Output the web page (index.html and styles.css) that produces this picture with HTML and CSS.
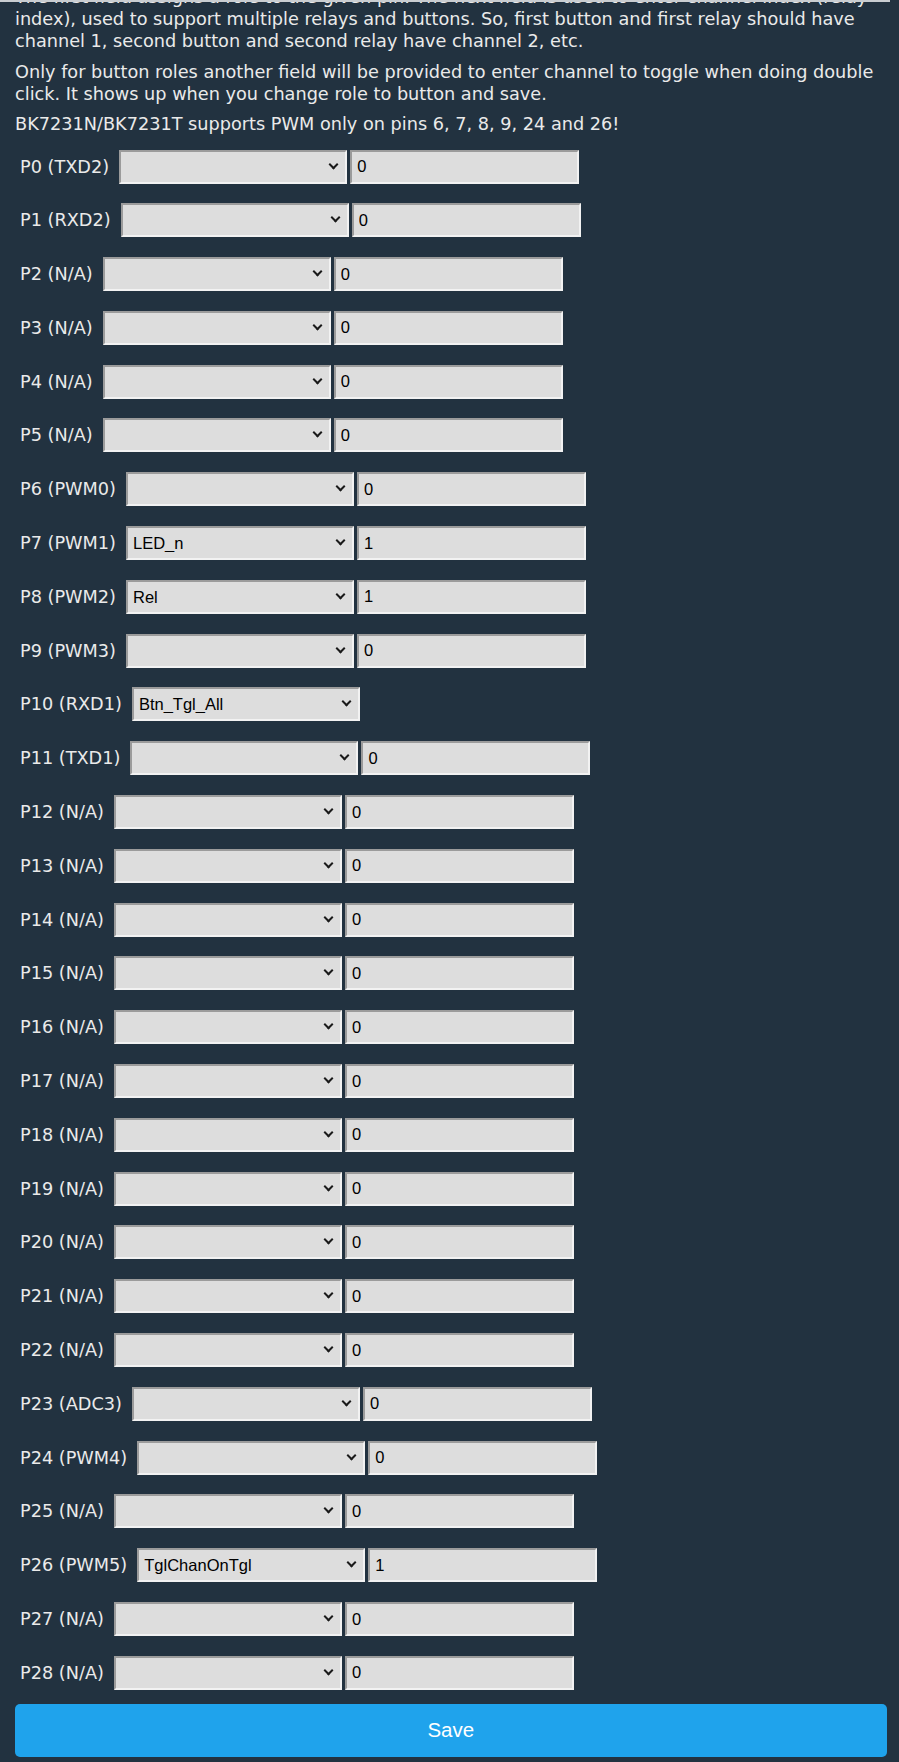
FILE: index.html
```html
<!DOCTYPE html>
<html>
<head>
    <meta charset="UTF-8">
    <link rel="stylesheet" href="styles.css">
</head>
<body>
    <div class="topline"></div>
    <div class="page">
        <p class="first">The first field assigns a role to the given pin. The next field is used to enter channel index (relay index), used to support multiple relays and buttons. So, first button and first relay should have channel 1, second button and second relay have channel 2, etc.</p>
        <p>Only for button roles another field will be provided to enter channel to toggle when doing double click. It shows up when you change role to button and save.</p>
        <p>BK7231N/BK7231T supports PWM only on pins 6, 7, 8, 9, 24 and 26!</p>

        <form class="pin-form" action="cfg_pins">
            <div class="pins">
                <div class="pin"><span class="pin-name">P0 (TXD2)</span><span class="pick"><select name="0"><option selected></option><option>Rel</option><option>LED_n</option></select></span><input name="r0" value="0"></div>
                <div class="pin"><span class="pin-name">P1 (RXD2)</span><span class="pick"><select name="1"><option selected></option><option>Rel</option><option>LED_n</option></select></span><input name="r1" value="0"></div>
                <div class="pin"><span class="pin-name">P2 (N/A)</span><span class="pick"><select name="2"><option selected></option><option>Rel</option><option>LED_n</option></select></span><input name="r2" value="0"></div>
                <div class="pin"><span class="pin-name">P3 (N/A)</span><span class="pick"><select name="3"><option selected></option><option>Rel</option><option>LED_n</option></select></span><input name="r3" value="0"></div>
                <div class="pin"><span class="pin-name">P4 (N/A)</span><span class="pick"><select name="4"><option selected></option><option>Rel</option><option>LED_n</option></select></span><input name="r4" value="0"></div>
                <div class="pin"><span class="pin-name">P5 (N/A)</span><span class="pick"><select name="5"><option selected></option><option>Rel</option><option>LED_n</option></select></span><input name="r5" value="0"></div>
                <div class="pin"><span class="pin-name">P6 (PWM0)</span><span class="pick"><select name="6"><option selected></option><option>Rel</option><option>LED_n</option></select></span><input name="r6" value="0"></div>
                <div class="pin"><span class="pin-name">P7 (PWM1)</span><span class="pick"><select name="7"><option></option><option>Rel</option><option selected>LED_n</option></select></span><input name="r7" value="1"></div>
                <div class="pin"><span class="pin-name">P8 (PWM2)</span><span class="pick"><select name="8"><option></option><option selected>Rel</option><option>LED_n</option></select></span><input name="r8" value="1"></div>
                <div class="pin"><span class="pin-name">P9 (PWM3)</span><span class="pick"><select name="9"><option selected></option><option>Rel</option><option>LED_n</option></select></span><input name="r9" value="0"></div>
                <div class="pin"><span class="pin-name">P10 (RXD1)</span><span class="pick"><select name="10"><option></option><option>Rel</option><option selected>Btn_Tgl_All</option></select></span></div>
                <div class="pin"><span class="pin-name">P11 (TXD1)</span><span class="pick"><select name="11"><option selected></option><option>Rel</option><option>LED_n</option></select></span><input name="r11" value="0"></div>
                <div class="pin"><span class="pin-name">P12 (N/A)</span><span class="pick"><select name="12"><option selected></option><option>Rel</option><option>LED_n</option></select></span><input name="r12" value="0"></div>
                <div class="pin"><span class="pin-name">P13 (N/A)</span><span class="pick"><select name="13"><option selected></option><option>Rel</option><option>LED_n</option></select></span><input name="r13" value="0"></div>
                <div class="pin"><span class="pin-name">P14 (N/A)</span><span class="pick"><select name="14"><option selected></option><option>Rel</option><option>LED_n</option></select></span><input name="r14" value="0"></div>
                <div class="pin"><span class="pin-name">P15 (N/A)</span><span class="pick"><select name="15"><option selected></option><option>Rel</option><option>LED_n</option></select></span><input name="r15" value="0"></div>
                <div class="pin"><span class="pin-name">P16 (N/A)</span><span class="pick"><select name="16"><option selected></option><option>Rel</option><option>LED_n</option></select></span><input name="r16" value="0"></div>
                <div class="pin"><span class="pin-name">P17 (N/A)</span><span class="pick"><select name="17"><option selected></option><option>Rel</option><option>LED_n</option></select></span><input name="r17" value="0"></div>
                <div class="pin"><span class="pin-name">P18 (N/A)</span><span class="pick"><select name="18"><option selected></option><option>Rel</option><option>LED_n</option></select></span><input name="r18" value="0"></div>
                <div class="pin"><span class="pin-name">P19 (N/A)</span><span class="pick"><select name="19"><option selected></option><option>Rel</option><option>LED_n</option></select></span><input name="r19" value="0"></div>
                <div class="pin"><span class="pin-name">P20 (N/A)</span><span class="pick"><select name="20"><option selected></option><option>Rel</option><option>LED_n</option></select></span><input name="r20" value="0"></div>
                <div class="pin"><span class="pin-name">P21 (N/A)</span><span class="pick"><select name="21"><option selected></option><option>Rel</option><option>LED_n</option></select></span><input name="r21" value="0"></div>
                <div class="pin"><span class="pin-name">P22 (N/A)</span><span class="pick"><select name="22"><option selected></option><option>Rel</option><option>LED_n</option></select></span><input name="r22" value="0"></div>
                <div class="pin"><span class="pin-name">P23 (ADC3)</span><span class="pick"><select name="23"><option selected></option><option>Rel</option><option>LED_n</option></select></span><input name="r23" value="0"></div>
                <div class="pin"><span class="pin-name">P24 (PWM4)</span><span class="pick"><select name="24"><option selected></option><option>Rel</option><option>LED_n</option></select></span><input name="r24" value="0"></div>
                <div class="pin"><span class="pin-name">P25 (N/A)</span><span class="pick"><select name="25"><option selected></option><option>Rel</option><option>LED_n</option></select></span><input name="r25" value="0"></div>
                <div class="pin"><span class="pin-name">P26 (PWM5)</span><span class="pick"><select name="26"><option></option><option>Rel</option><option selected>TglChanOnTgl</option></select></span><input name="r26" value="1"></div>
                <div class="pin"><span class="pin-name">P27 (N/A)</span><span class="pick"><select name="27"><option selected></option><option>Rel</option><option>LED_n</option></select></span><input name="r27" value="0"></div>
                <div class="pin"><span class="pin-name">P28 (N/A)</span><span class="pick"><select name="28"><option selected></option><option>Rel</option><option>LED_n</option></select></span><input name="r28" value="0"></div>
            </div>
            <button type="submit" class="save">Save</button>
        </form>
    </div>
</body>
</html>
```

FILE: styles.css
```css
html {
    background: #223240;
}
body {
    font-family: "DejaVu Sans", Verdana, sans-serif;
    font-size: 17.7px;
    color: #eaeaea;
    margin: 0;
    overflow: hidden;
}
.topline {
    position: fixed;
    top: 0;
    left: 0;
    width: 890px;
    height: 2px;
    background: #c9cdd1;
}
.page {
    padding: 0 12.5px 0 15px;
}
p {
    margin: 0 0 8.5px;
    line-height: 22px;
}
p.first {
    margin-top: -14px;
}
.pins {
    display: flex;
    flex-direction: column;
    gap: 19.8px;
    padding: 6px 0 13.7px;
}
.pin {
    display: flex;
    align-items: center;
    padding-left: 5px;
}
.pin-name {
    margin-right: 10px;
    white-space: nowrap;
}
.pick {
    position: relative;
    display: block;
}
.pick::after {
    content: "";
    position: absolute;
    right: 10px;
    top: 11px;
    width: 5px;
    height: 5px;
    border-right: 2px solid #1a1a1a;
    border-bottom: 2px solid #1a1a1a;
    transform: rotate(45deg);
    pointer-events: none;
}
select, input {
    -webkit-appearance: none;
    appearance: none;
    box-sizing: border-box;
    height: 34px;
    margin: 0;
    padding: 0 5px;
    background: #dddddd;
    color: #000;
    font-family: "Liberation Sans", Arial, sans-serif;
    font-size: 16.5px;
    border: 2px solid;
    border-color: #9b9b9b #f2f2f2 #f2f2f2 #9b9b9b;
    border-radius: 0;
    outline: none;
}
select {
    display: block;
    width: 228px;
}
input {
    width: 229px;
    margin-left: 3px;
}
.save {
    display: block;
    width: 100%;
    height: 53px;
    border: 0;
    border-radius: 5px;
    background: #1fa3ec;
    color: #fff;
    font-family: "Liberation Sans", Arial, sans-serif;
    font-size: 20.5px;
    cursor: pointer;
}
```
